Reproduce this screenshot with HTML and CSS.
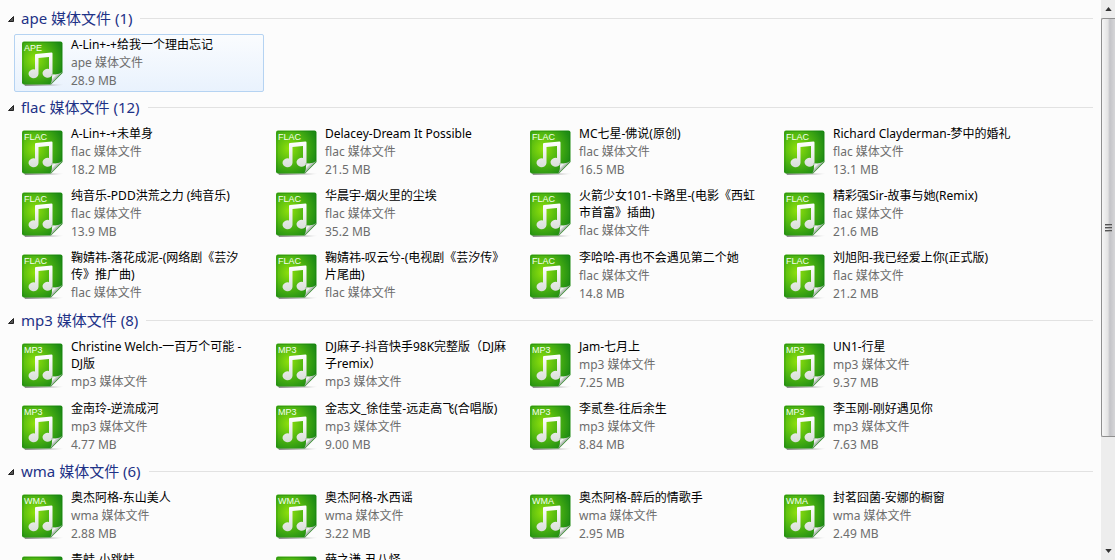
FILE: index.html
```html
<!DOCTYPE html>
<html lang="zh-CN">

<head>
    <meta charset="UTF-8">
    <title>媒体文件</title>
    <link rel="stylesheet" href="styles.css">
    <script>
    var groups = [
        { type: "ape", count: 1, files: [
            ["A-Lin+-+给我一个理由忘记", "28.9 MB"]
        ] },
        { type: "flac", count: 12, files: [
            ["A-Lin+-+未单身", "18.2 MB"],
            ["Delacey-Dream It Possible", "21.5 MB"],
            ["MC七星-佛说(原创)", "16.5 MB"],
            ["Richard Clayderman-梦中的婚礼", "13.1 MB"],
            ["纯音乐-PDD洪荒之力 (纯音乐)", "13.9 MB"],
            ["华晨宇-烟火里的尘埃", "35.2 MB"],
            ["火箭少女101-卡路里-(电影《西虹市首富》插曲)", ""],
            ["精彩强Sir-故事与她(Remix)", "21.6 MB"],
            ["鞠婧祎-落花成泥-(网络剧《芸汐<br>传》推广曲)", ""],
            ["鞠婧祎-叹云兮-(电视剧《芸汐传》片尾曲)", ""],
            ["李哈哈-再也不会遇见第二个她", "14.8 MB"],
            ["刘旭阳-我已经爱上你(正式版)", "21.2 MB"]
        ] },
        { type: "mp3", count: 8, files: [
            ["Christine Welch-一百万个可能 -<br>DJ版", ""],
            ["DJ麻子-抖音快手98K完整版（DJ麻子remix）", ""],
            ["Jam-七月上", "7.25 MB"],
            ["UN1-行星", "9.37 MB"],
            ["金南玲-逆流成河", "4.77 MB"],
            ["金志文_徐佳莹-远走高飞(合唱版)", "9.00 MB"],
            ["李贰叁-往后余生", "8.84 MB"],
            ["李玉刚-刚好遇见你", "7.63 MB"]
        ] },
        { type: "wma", count: 6, files: [
            ["奥杰阿格-东山美人", "2.88 MB"],
            ["奥杰阿格-水西谣", "3.22 MB"],
            ["奥杰阿格-醉后的情歌手", "2.95 MB"],
            ["封茗囧菌-安娜的橱窗", "2.49 MB"],
            ["青蛙-小跳蛙", ""],
            ["薛之谦-丑八怪", ""]
        ] }
    ];

    window.onload = function() {
        var html = "";
        for (var i = 0; i < groups.length; i++) {
            html += groupHtml(groups[i]);
        }
        document.getElementById("list").innerHTML = html;

        var heads = document.getElementsByClassName("toggle");
        for (var j = 0; j < heads.length; j++) {
            heads[j].onclick = toggle;
        }
        var files = document.getElementsByClassName("file");
        for (var k = 0; k < files.length; k++) {
            files[k].onclick = select;
        }
        files[0].classList.add("selected");
    };

    function groupHtml(group) {
        var html = '<section class="group"><h2 class="head"><button type="button" class="toggle">' +
            '<svg class="arrow" viewBox="0 0 6 6"><path d="M5.500 0.500V5.500H0.500Z"/></svg>' +
            group.type + ' 媒体文件 (' + group.count + ')</button></h2><ul class="files">';
        for (var i = 0; i < group.files.length; i++) {
            html += fileHtml(group.type, group.files[i]);
        }
        return html + '</ul></section>';
    }

    function fileHtml(type, file) {
        // full-width brackets sit in the middle of their box
        var name = file[0].replace(/[（）]/g, '<span class="bracket">$&</span>');
        return '<li><a href="#" class="file"><span class="icon">' +
            '<svg viewBox="0 0 44 46"><use href="#music"/></svg>' +
            '<span class="tag">' + type.toUpperCase() + '</span></span>' +
            '<span class="text"><span class="name">' + name + '</span>' +
            '<span class="info">' + type + ' 媒体文件</span>' +
            '<span class="info">' + file[1] + '</span></span></a></li>';
    }

    function toggle() {
        this.parentNode.parentNode.classList.toggle("closed");
    }

    function select(e) {
        e.preventDefault();
        document.querySelector(".selected").classList.remove("selected");
        this.classList.add("selected");
    }
    </script>
</head>

<body>
    <svg class="defs">
        <defs>
            <radialGradient id="green" cx="0.32" cy="0.42" r="0.7">
                <stop offset="0" stop-color="#8fe00c"/>
                <stop offset="0.5" stop-color="#52b810"/>
                <stop offset="1" stop-color="#1f8c14"/>
            </radialGradient>
            <linearGradient id="fold" x1="0" y1="0" x2="1" y2="1">
                <stop offset="0.1" stop-color="#7d9080"/>
                <stop offset="0.3" stop-color="#f6f8f7"/>
                <stop offset="0.5" stop-color="#98a59b"/>
            </linearGradient>
            <linearGradient id="note" x1="0" y1="0" x2="0" y2="1">
                <stop offset="0" stop-color="#ffffff"/>
                <stop offset="1" stop-color="#d9ded9"/>
            </linearGradient>
            <linearGradient id="shade" x1="0" y1="0" x2="1" y2="0">
                <stop offset="0" stop-color="#8c8c8c"/>
                <stop offset="1" stop-color="#8c8c8c" stop-opacity="0"/>
            </linearGradient>
        </defs>
        <symbol id="music" viewBox="0 0 44 46">
            <path d="M2 43H30L42 43.500Q36 45 27 45H3Z" fill="url(#shade)"/>
            <path d="M2 0.500H38.500Q40.500 0.500 40.500 2.500V32L29 43.500H2Q0 43.500 0 41.500V2.500Q0 0.500 2 0.500Z" fill="url(#green)"/>
            <path d="M1 42V2.500Q1 1.500 2 1.500H38.500Q39.500 1.500 39.500 2.500V31" fill="none" stroke="#0f7a0c" stroke-opacity="0.3"/>
            <path d="M13 14Q13 13 14 12.900L29.500 11.500Q30.500 11.500 30.500 12.500V32.500A5 4.500 0 1 1 27 28V16L16.500 17V33A5 4.500 0 1 1 13 28.500Z" fill="url(#note)"/>
            <path d="M40.500 31L28 44Q31 39 29.500 33Q36 34.500 40.500 31Z" fill="url(#fold)"/>
        </symbol>
    </svg>

    <div class="window">
        <main id="list"></main>
        <div class="scrollbar">
            <button type="button" class="up" aria-label="向上滚动"><svg viewBox="0 0 8 5"><path d="M4 0L8 5H0Z"/></svg></button>
            <div class="track">
                <div class="thumb"><i></i><i></i><i></i></div>
            </div>
            <button type="button" class="down" aria-label="向下滚动"><svg viewBox="0 0 8 5"><path d="M0 0H8L4 5Z"/></svg></button>
        </div>
    </div>
</body>

</html>
```
FILE: styles.css
```css
* {
    box-sizing: border-box;
}

body,
h2,
ul {
    margin: 0;
    padding: 0;
}

body {
    background-color: #fcfcfc;
    color: #000;
    font: 12px/18px "Noto Sans", "Noto Sans CJK SC", sans-serif;
}

button {
    border: 0;
    padding: 0;
    background: none;
    color: inherit;
    font: inherit;
}

.defs {
    position: absolute;
    width: 0;
    height: 0;
}

.window {
    display: flex;
    height: 100vh;
    overflow: hidden;
}

#list {
    flex: 1;
    padding: 3px 8px 0 8px;
    overflow: hidden;
}

/* group header */
.head {
    display: flex;
    align-items: center;
    gap: 8px;
    height: 31px;
    color: #1e3287;
    font-size: 15px;
    font-weight: normal;
    line-height: 31px;
}

.head::after {
    content: "";
    flex: 1;
    height: 1px;
    background-color: #e2e2e2;
}

.toggle {
    display: flex;
    align-items: center;
    gap: 7px;
    white-space: pre;
}

.arrow {
    width: 6px;
    height: 6px;
    fill: #555;
    stroke: #222;
}

.closed .files {
    display: none;
}

/* file tiles */
.files {
    display: grid;
    grid-template-columns: repeat(auto-fill, 250px);
    gap: 4px;
    padding-left: 6px;
    list-style: none;
}

.file {
    display: flex;
    gap: 5px;
    height: 58px;
    padding: 1px 5px 0 7px;
    border: 1px solid transparent;
    border-radius: 2px;
    color: #000;
    text-decoration: none;
}

.file:hover {
    background-color: #f3f8fe;
}

.file.selected {
    border-color: #b5d3f2;
    background: linear-gradient(#fafcfe, #e9f2fd);
}

.icon {
    position: relative;
    flex: none;
    width: 44px;
    height: 46px;
    margin-top: 5px;
}

.icon svg {
    display: block;
    width: 44px;
    height: 46px;
}

.tag {
    position: absolute;
    top: 1px;
    left: 2px;
    color: #f4fff0;
    font: 9px/12px "Liberation Sans", sans-serif;
}

.text {
    flex: 1;
    min-width: 0;
}

.name,
.info {
    display: block;
}

.name {
    margin-bottom: 1px;
    line-height: 17px;
}

.bracket {
    font-family: "Noto Sans CJK TC", sans-serif;
    line-height: 12px;
}

.info {
    color: #6d6d6d;
}

/* scrollbar */
.scrollbar {
    display: flex;
    flex-direction: column;
    width: 14px;
    background-color: #ededed;
}

.up,
.down {
    height: 18px;
    line-height: 0;
}

.up svg,
.down svg {
    width: 7px;
    height: 4px;
    fill: #333;
}

.track {
    flex: 1;
}

.thumb {
    display: flex;
    flex-direction: column;
    align-items: center;
    justify-content: center;
    gap: 1px;
    height: 80%;
    border: 1px solid #8f8f8f;
    border-right: 0;
    border-radius: 2px 0 0 2px;
    background: linear-gradient(to right, #f6f6f6, #e4e4e4 45%, #c4c4c8 60%, #d6d6d8);
}

.thumb i {
    width: 7px;
    height: 2px;
    border-top: 1px solid #555;
    background-color: #aaa;
}
```
